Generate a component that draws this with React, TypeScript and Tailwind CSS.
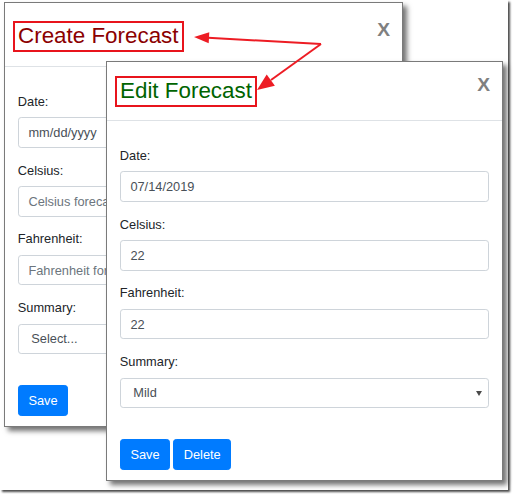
import React from "react";

const font = { fontFamily: '"Liberation Sans", Arial, sans-serif' };

type Field = { label: string; value?: string; placeholder?: string };

function Input({ value, placeholder }: { value?: string; placeholder?: string }) {
  return (
    <input
      readOnly
      value={value ?? ""}
      placeholder={placeholder}
      className="block w-full h-[30.4px] px-[9.6px] border border-[#ced4da] rounded-[3.2px] text-[12.8px] leading-[19.2px] text-[#495057] placeholder:text-[#6c757d] bg-white outline-none"
      style={font}
    />
  );
}

function Select({ text, arrow }: { text: string; arrow: boolean }) {
  return (
    <div className="flex items-center justify-between h-[30.4px] pl-[12.5px] pr-[6px] border border-[#ced4da] rounded-[3.2px] text-[12.8px] leading-[19.2px] text-[#495057] bg-white">
      <span>{text}</span>
      {arrow && (
        <svg width="6" height="5" viewBox="0 0 6 5">
          <polygon points="0,0 6,0 3,5" fill="#4a4a4a" />
        </svg>
      )}
    </div>
  );
}

function Dialog({
  title,
  titleColor,
  fields,
  summary,
  showArrow,
  withDelete,
  pos,
  headerPt,
  headerPb,
}: {
  title: string;
  titleColor: string;
  fields: Field[];
  summary: string;
  showArrow: boolean;
  withDelete: boolean;
  pos: string;
  headerPt: string;
  headerPb: string;
}) {
  return (
    <div
      className={`absolute ${pos} bg-white border border-[#7a7a7a] shadow-[4px_4px_5px_rgba(0,0,0,0.55)]`}
      style={font}
    >
      <div
        className={`flex items-start justify-between pl-[8px] pr-[12px] ${headerPt} ${headerPb} border-b border-[#dee2e6]`}
      >
        <h3
          className="border-2 border-[#e8141c] px-[3px] text-[22.4px] leading-[26.88px] font-normal"
          style={{ color: titleColor }}
        >
          {title}
        </h3>
        <span className="mt-[-1px] text-[19.2px] font-bold leading-[19.2px] text-[#808080]">X</span>
      </div>
      <div className="px-[12.8px] pt-[25px] pb-[10px]">
        {fields.map((f) => (
          <div key={f.label} className="mb-[12.8px]">
            <label className="block mb-[6.4px] text-[12.8px] leading-[19.2px] text-[#212529]">
              {f.label}
            </label>
            <Input value={f.value} placeholder={f.placeholder} />
          </div>
        ))}
        <div>
          <label className="block mb-[6.4px] text-[12.8px] leading-[19.2px] text-[#212529]">
            Summary:
          </label>
          <Select text={summary} arrow={showArrow} />
        </div>
        <div className="flex gap-[3px] mt-[31px]">
          <button className="bg-[#007bff] text-white text-[12.8px] leading-[19.2px] px-[9.6px] py-[4.8px] border border-[#007bff] rounded-[3.2px]">
            Save
          </button>
          {withDelete && (
            <button className="bg-[#007bff] text-white text-[12.8px] leading-[19.2px] px-[9.6px] py-[4.8px] border border-[#007bff] rounded-[3.2px]">
              Delete
            </button>
          )}
        </div>
      </div>
    </div>
  );
}

export default function App() {
  return (
    <div className="w-[513px] h-[494px] bg-white overflow-hidden">
      <div className="relative w-[508px] h-[490px] bg-white shadow-[2px_2px_2px_rgba(0,0,0,0.7)]">
        <Dialog
          title="Create Forecast"
          titleColor="#8b0000"
          fields={[
            { label: "Date:", value: "mm/dd/yyyy" },
            { label: "Celsius:", placeholder: "Celsius forecast" },
            { label: "Fahrenheit:", placeholder: "Fahrenheit forecast" },
          ]}
          summary="Select..."
          showArrow={true}
          withDelete={false}
          pos="left-[4px] top-[2px] w-[399px]"
          headerPt="pt-[18px]"
          headerPb="pb-[14px]"
        />
        <Dialog
          title="Edit Forecast"
          titleColor="#006400"
          fields={[
            { label: "Date:", value: "07/14/2019" },
            { label: "Celsius:", value: "22" },
            { label: "Fahrenheit:", value: "22" },
          ]}
          summary="Mild"
          showArrow={true}
          withDelete={true}
          pos="left-[106px] top-[61px] w-[397px]"
          headerPt="pt-[14px]"
          headerPb="pb-[13px]"
        />
        <svg className="absolute left-0 top-0" width="508" height="490" viewBox="0 0 508 490">
          <line x1="321" y1="44" x2="208" y2="37.8" stroke="#ed1c24" strokeWidth="2" />
          <polygon points="194,37 209.3,32.3 208.7,43.3" fill="#ed1c24" />
          <line x1="321" y1="44" x2="271" y2="80" stroke="#ed1c24" strokeWidth="2" />
          <polygon points="257,90 274.9,85.8 266.7,74.4" fill="#ed1c24" />
        </svg>
      </div>
    </div>
  );
}
